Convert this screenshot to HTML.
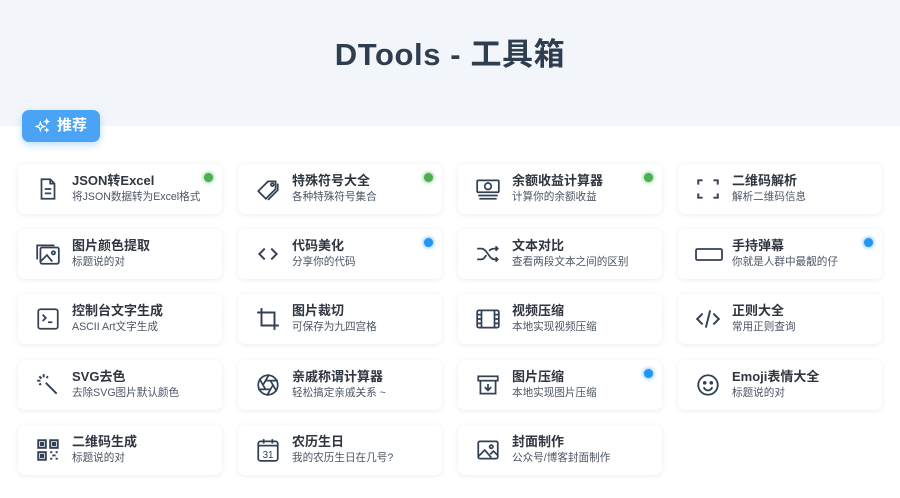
<!DOCTYPE html><html><head><meta charset="utf-8"><style>
*{margin:0;padding:0;box-sizing:border-box}
body{width:900px;height:498px;background:#fff;font-family:"Liberation Sans","Noto Sans CJK SC",sans-serif;position:relative;overflow:hidden;color:#2c3e50}
.hd{position:absolute;left:0;top:0;width:900px;height:126px;background:#f2f6fa}
h1{position:absolute;top:29px;width:900px;text-align:center;font-size:31px;font-weight:bold;color:#2f3e4e;letter-spacing:0.6px}
.badge{position:absolute;left:22px;top:110px;width:78px;height:32px;border-radius:7px;background:#4aa3f5;box-shadow:0 3px 8px rgba(74,163,245,.35);color:#fff;font-weight:bold;font-size:15px;line-height:32px;padding-left:35px}
.badge svg{position:absolute;left:12px;top:8px}
.c{position:absolute;width:204px;height:50px;background:#fff;border-radius:7px;box-shadow:0 1px 6px rgba(0,0,0,.08)}
.c svg{position:absolute;left:17px;top:12px}
.t{position:absolute;left:54px;top:6px;font-size:13px;font-weight:bold;color:#2f3640;white-space:nowrap}
.s{position:absolute;left:54px;top:25px;font-size:10.6px;color:#4b5563;white-space:nowrap}
.d{position:absolute;right:9px;top:9px;width:9px;height:9px;border-radius:50%}
.g{background:#4caf50;box-shadow:0 0 4px #4caf50}.b{background:#2196f3;box-shadow:0 0 4px #2196f3}
</style></head><body>
<div class="hd"></div>
<h1>DTools - 工具箱</h1>
<div class="badge"><svg width="17" height="17" viewBox="0 0 24 24" fill="none" stroke="#fff" stroke-width="1.6"><path d="M9 6l1.5 4.5L15 12l-4.5 1.5L9 18l-1.5-4.5L3 12l4.5-1.5z"/><path d="M18 2l.8 2.2L21 5l-2.2.8L18 8l-.8-2.2L15 5l2.2-.8z"/><path d="M18 15l.6 1.4L20 17l-1.4.6L18 19l-.6-1.4L16 17l1.4-.6z"/></svg>推荐</div>

<div class="c" style="left:18px;top:164px"><svg width="26" height="26" viewBox="0 0 24 24" fill="none" stroke="#334155" stroke-width="1.6"><path d="M6 3h8l4 4v14H6z M14 3v4h4 M9 12h6 M9 16h6"/></svg><div class="t">JSON转Excel</div><div class="s">将JSON数据转为Excel格式</div><div class="d g"></div></div>
<div class="c" style="left:238px;top:164px"><svg width="26" height="26" viewBox="0 0 24 24" fill="none" stroke="#334155" stroke-width="1.6"><path d="M3 14l9-9h7v7l-9 9z"/><circle cx="16" cy="8" r="1.3"/><path d="M21 7v6l-9 9"/></svg><div class="t">特殊符号大全</div><div class="s">各种特殊符号集合</div><div class="d g"></div></div>
<div class="c" style="left:458px;top:164px"><svg width="26" height="26" viewBox="0 0 24 24" fill="none" stroke="#334155" stroke-width="1.6"><rect x="2" y="4" width="20" height="11" rx="1"/><circle cx="12" cy="9.5" r="3"/><path d="M3 18h18M4 21h16"/></svg><div class="t">余额收益计算器</div><div class="s">计算你的余额收益</div><div class="d g"></div></div>
<div class="c" style="left:678px;top:164px"><svg width="26" height="26" viewBox="0 0 24 24" fill="none" stroke="#334155" stroke-width="1.8"><path d="M3 8V4h4M17 4h4v4M21 16v4h-4M7 20H3v-4"/></svg><div class="t">二维码解析</div><div class="s">解析二维码信息</div></div>

<div class="c" style="left:18px;top:229px"><svg width="26" height="26" viewBox="0 0 24 24" fill="none" stroke="#334155" stroke-width="1.6"><rect x="5" y="6" width="17" height="15" rx="1.5"/><path d="M2 17V4h16"/><circle cx="17" cy="11" r="1.5"/><path d="M5 19l6-6 5 6"/></svg><div class="t">图片颜色提取</div><div class="s">标题说的对</div></div>
<div class="c" style="left:238px;top:229px"><svg width="26" height="26" viewBox="0 0 24 24" fill="none" stroke="#334155" stroke-width="1.8"><path d="M9 7l-5 5 5 5M15 7l5 5-5 5"/></svg><div class="t">代码美化</div><div class="s">分享你的代码</div><div class="d b"></div></div>
<div class="c" style="left:458px;top:229px"><svg width="26" height="26" viewBox="0 0 24 24" fill="none" stroke="#334155" stroke-width="1.6"><path d="M2 7h4c5 0 7 10 12 10h3M2 17h4c2 0 3-2 4.5-4M13 9c1.5-1.5 3-2 5-2h3M19 5l2 2-2 2M19 15l2 2-2 2"/></svg><div class="t">文本对比</div><div class="s">查看两段文本之间的区别</div></div>
<div class="c" style="left:678px;top:229px"><svg width="28" height="26" viewBox="0 0 28 24" fill="none" stroke="#334155" stroke-width="1.8"><rect x="1" y="7" width="26" height="11" rx="1.5"/></svg><div class="t">手持弹幕</div><div class="s">你就是人群中最靓的仔</div><div class="d b"></div></div>

<div class="c" style="left:18px;top:294px"><svg width="26" height="26" viewBox="0 0 24 24" fill="none" stroke="#334155" stroke-width="1.6"><rect x="3" y="3" width="18" height="18" rx="2"/><path d="M7 8l3 3-3 3M12 15h4"/></svg><div class="t">控制台文字生成</div><div class="s">ASCII Art文字生成</div></div>
<div class="c" style="left:238px;top:294px"><svg width="26" height="26" viewBox="0 0 24 24" fill="none" stroke="#334155" stroke-width="1.8"><path d="M6 2v16h16M2 6h16v16"/></svg><div class="t">图片裁切</div><div class="s">可保存为九四宫格</div></div>
<div class="c" style="left:458px;top:294px"><svg width="26" height="26" viewBox="0 0 24 24" fill="none" stroke="#334155" stroke-width="1.6"><rect x="2" y="4" width="20" height="16" rx="1.5"/><path d="M6 4v16M18 4v16M2 8h4M2 12h4M2 16h4M18 8h4M18 12h4M18 16h4"/></svg><div class="t">视频压缩</div><div class="s">本地实现视频压缩</div></div>
<div class="c" style="left:678px;top:294px"><svg width="26" height="26" viewBox="0 0 24 24" fill="none" stroke="#334155" stroke-width="1.8"><path d="M7 7l-5 5 5 5M17 7l5 5-5 5M14 4l-4 16"/></svg><div class="t">正则大全</div><div class="s">常用正则查询</div></div>

<div class="c" style="left:18px;top:360px"><svg width="26" height="26" viewBox="0 0 24 24" fill="none" stroke="#334155" stroke-width="1.8"><path d="M10 10l10 10M8 2v3M2 8h3M4 4l2 2M12 4l-1.5 1.5M4 12l1.5-1.5"/></svg><div class="t">SVG去色</div><div class="s">去除SVG图片默认颜色</div></div>
<div class="c" style="left:238px;top:360px"><svg width="26" height="26" viewBox="0 0 24 24" fill="none" stroke="#334155" stroke-width="1.6"><circle cx="12" cy="12" r="9"/><path d="M14.3 8l5.7 9.9M9.7 8h11.4M7.4 12l5.7-9.9M9.7 16L4 6.1M14.3 16H2.9M16.6 12l-5.7 9.9"/></svg><div class="t">亲戚称谓计算器</div><div class="s">轻松搞定亲戚关系 ~</div></div>
<div class="c" style="left:458px;top:360px"><svg width="26" height="26" viewBox="0 0 24 24" fill="none" stroke="#334155" stroke-width="1.6"><rect x="3" y="4" width="18" height="4"/><path d="M5 8v12h14V8M12 11v6M9 14l3 3 3-3"/></svg><div class="t">图片压缩</div><div class="s">本地实现图片压缩</div><div class="d b"></div></div>
<div class="c" style="left:678px;top:360px"><svg width="26" height="26" viewBox="0 0 24 24" fill="none" stroke="#334155" stroke-width="1.7"><circle cx="12" cy="12" r="9"/><path d="M8 14c1 2 2.5 3 4 3s3-1 4-3"/><circle cx="9" cy="10" r=".8" fill="#334155"/><circle cx="15" cy="10" r=".8" fill="#334155"/></svg><div class="t">Emoji表情大全</div><div class="s">标题说的对</div></div>

<div class="c" style="left:18px;top:425px"><svg width="26" height="26" viewBox="0 0 24 24" fill="none" stroke="#334155" stroke-width="1.8"><rect x="3" y="3" width="7" height="7"/><rect x="14" y="3" width="7" height="7"/><rect x="3" y="14" width="7" height="7"/><path d="M14 14h2M19 14h2M16 17h3M14 20h2M19 20h2"/><rect x="5.5" y="5.5" width="2" height="2" fill="#334155"/><rect x="16.5" y="5.5" width="2" height="2" fill="#334155"/><rect x="5.5" y="16.5" width="2" height="2" fill="#334155"/></svg><div class="t">二维码生成</div><div class="s">标题说的对</div></div>
<div class="c" style="left:238px;top:425px"><svg width="26" height="26" viewBox="0 0 24 24" fill="none" stroke="#334155" stroke-width="1.6"><rect x="3" y="4" width="18" height="18" rx="2"/><path d="M3 8h18M8 2v4M16 2v4"/><text x="12" y="19.5" font-size="9" text-anchor="middle" fill="#334155" stroke="none" font-family="Liberation Sans">31</text></svg><div class="t">农历生日</div><div class="s">我的农历生日在几号?</div></div>
<div class="c" style="left:458px;top:425px"><svg width="26" height="26" viewBox="0 0 24 24" fill="none" stroke="#334155" stroke-width="1.6"><rect x="3" y="4" width="18" height="16" rx="1.5"/><circle cx="15" cy="9" r="1.5"/><path d="M3 18l6-6 6 7M14 16l3-3 4 4"/></svg><div class="t">封面制作</div><div class="s">公众号/博客封面制作</div></div>
</body></html>
